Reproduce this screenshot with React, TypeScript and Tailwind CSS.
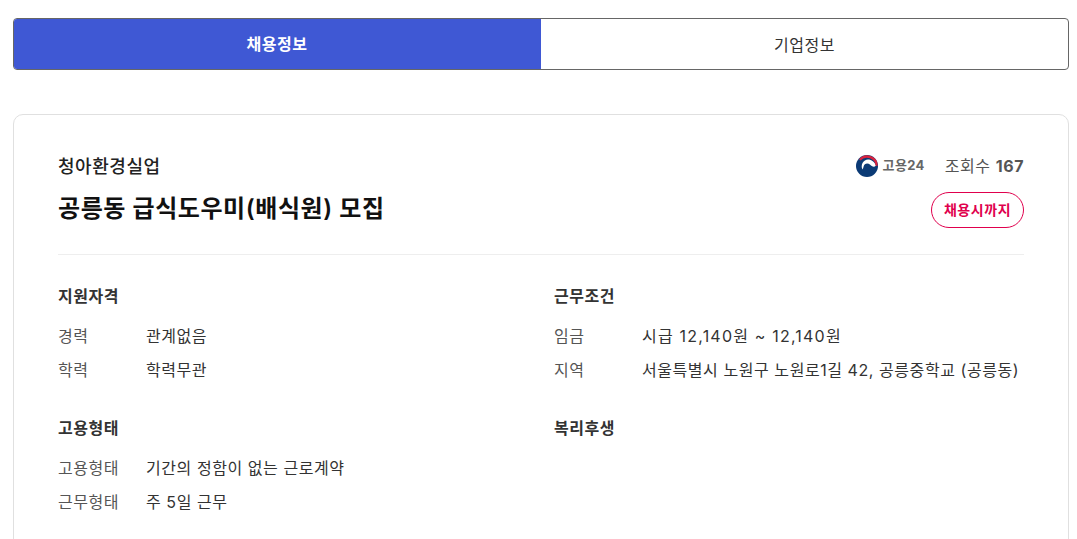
const font = "font-['Inter','Noto_Sans_CJK_KR',sans-serif] tracking-[0.035em]";

function InfoRow({ label, value, wide }: { label: string; value: string; wide?: boolean }) {
    return (
        <div className="h-[34px] pt-px text-base leading-[34px] text-[#333]">
            <span className="inline-block w-[88px] text-[#555]">{label}</span>
            <span className={wide ? "whitespace-nowrap tracking-[0.075em]" : "whitespace-nowrap"}>{value}</span>
        </div>
    );
}

function InfoGroup({ title, rows }: { title: string; rows: { label: string; value: string; wide?: boolean }[] }) {
    return (
        <div className="h-[132px]">
            <h3 className="flex h-[24px] items-center pt-[2px] text-base font-semibold text-[#333]">{title}</h3>
            <div className="mt-[11px]">
                {rows.map((row) => (
                    <InfoRow key={row.label} label={row.label} value={row.value} wide={row.wide} />
                ))}
            </div>
        </div>
    );
}

function Work24Logo() {
    return (
        <div className="flex items-center gap-[5px]">
            <svg width="22" height="22" viewBox="0 0 22 22">
                <circle cx="11" cy="11" r="11" fill="#0b3a75" />
                <path d="M6.5 14.5C4.2 10 7.5 4.5 12 4.5C15.5 4.5 18.5 7 20 10.5C18 12.8 15.8 11.3 14.2 9.8C11.6 7.6 8.2 8.6 7.6 11.5C7.3 12.7 7 13.7 6.5 14.5Z" fill="#fff" />
                <path d="M3 4.2A10.6 10.6 0 0 1 21.8 10.8L19.6 10.8A8.6 8.6 0 0 0 4.6 5.6Z" fill="#d8233f" />
            </svg>
            <span className="text-[13px] font-bold tracking-[0.03em] text-[#666]">고용24</span>
        </div>
    );
}

export default function App() {
    return (
        <div className={`h-[539px] w-[1077px] overflow-hidden bg-white px-[13px] pt-[18px] ${font}`}>
            {/* Tabs */}
            <div className="flex h-[52px] w-[1056px] overflow-hidden rounded-[4px] border border-[#666]">
                <div className="-my-px -ml-px flex w-[528px] items-center justify-center bg-[#3f58d4] text-base font-bold text-white">
                    채용정보
                </div>
                <div className="flex flex-1 items-center justify-center pt-[2px] text-base text-[#333]">기업정보</div>
            </div>

            {/* Card */}
            <div className="mt-[44px] h-[500px] w-[1056px] rounded-[10px] border border-[#e0e0e0] px-[44px] pt-[36px]">
                <div className="flex h-[104px] justify-between border-b border-[#eee]">
                    <div>
                        <p className="flex h-[28px] items-center pt-[4px] text-lg font-medium text-[#222]">청아환경실업</p>
                        <h2 className="mt-[13px] flex h-[34px] items-center text-2xl font-semibold text-[#111]">
                            공릉동 급식도우미(배식원) 모집
                        </h2>
                    </div>
                    <div className="flex flex-col items-end">
                        <div className="flex h-[28px] items-center gap-[20px] pt-[2px]">
                            <Work24Logo />
                            <div className="text-base text-[#555]">
                                조회수 <span className="font-bold">167</span>
                            </div>
                        </div>
                        <div className="mt-[13px] flex h-[36px] w-[93px] items-center justify-center rounded-full border border-[#e0004d] bg-white text-sm font-bold text-[#e0004d]">
                            채용시까지
                        </div>
                    </div>
                </div>

                <div className="mt-[28px] grid grid-cols-[496px_1fr]">
                    <InfoGroup
                        title="지원자격"
                        rows={[
                            { label: "경력", value: "관계없음" },
                            { label: "학력", value: "학력무관" },
                        ]}
                    />
                    <InfoGroup
                        title="근무조건"
                        rows={[
                            { label: "임금", value: "시급 12,140원 ~ 12,140원", wide: true },
                            { label: "지역", value: "서울특별시 노원구 노원로1길 42, 공릉중학교 (공릉동)" },
                        ]}
                    />
                    <InfoGroup
                        title="고용형태"
                        rows={[
                            { label: "고용형태", value: "기간의 정함이 없는 근로계약" },
                            { label: "근무형태", value: "주 5일 근무" },
                        ]}
                    />
                    <InfoGroup title="복리후생" rows={[]} />
                </div>
            </div>
        </div>
    );
}
